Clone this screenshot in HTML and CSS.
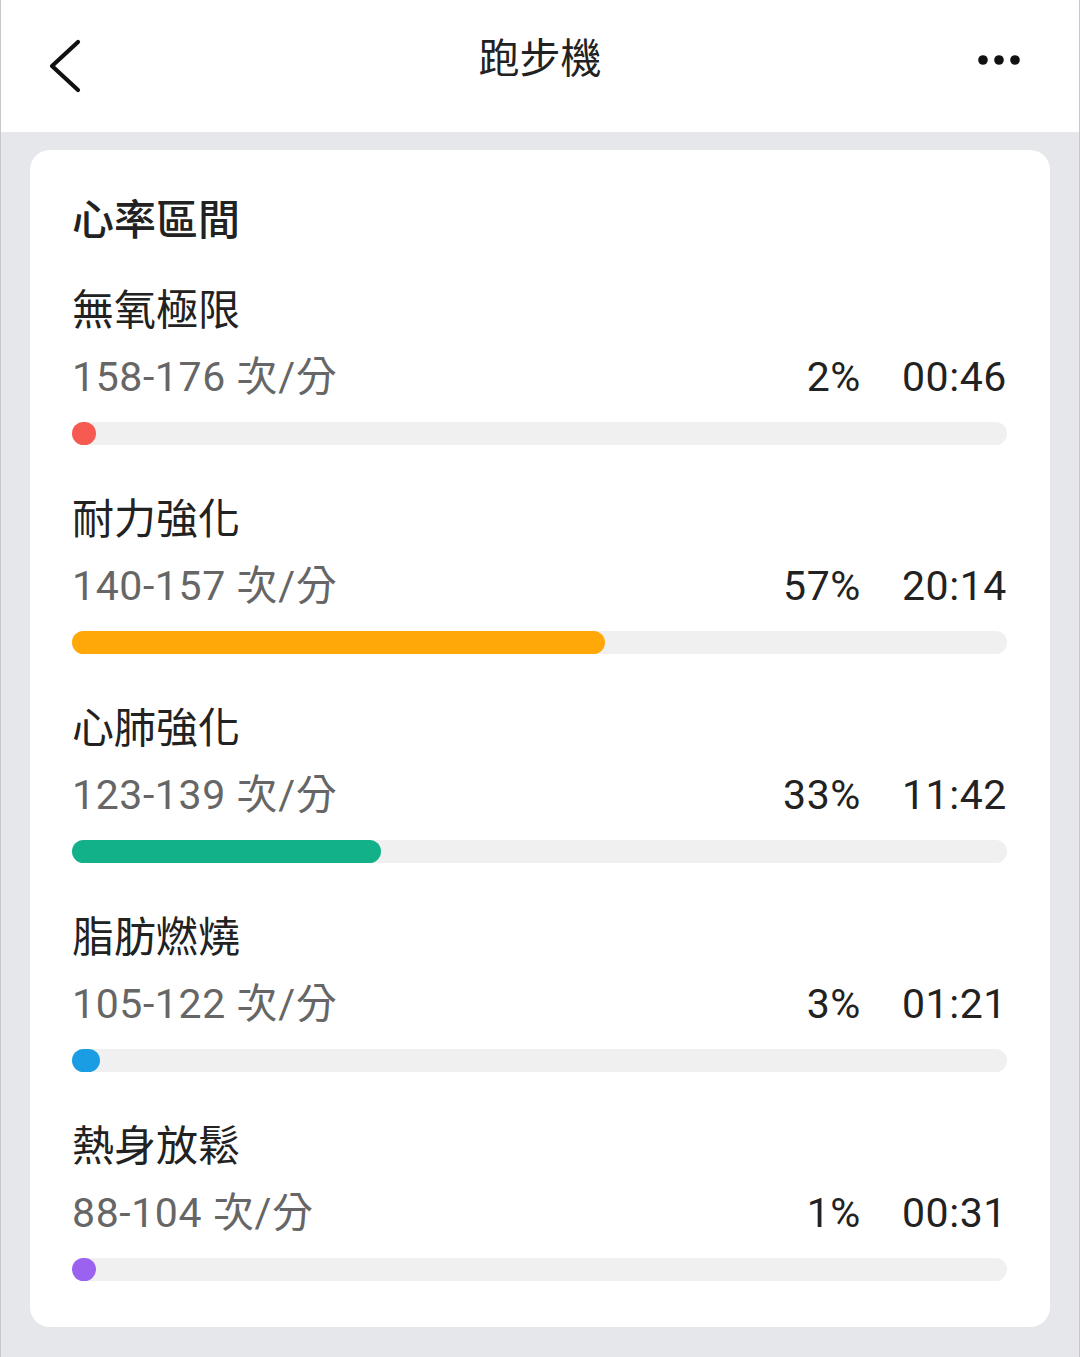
FILE: index.html
```html
<!DOCTYPE html>
<html lang="zh-Hant">
<head>
    <meta charset="UTF-8">
    <meta name="viewport" content="width=device-width, initial-scale=1.0">
    <title>跑步機</title>
    <link rel="stylesheet" href="styles.css">
</head>
<body>

<header class="topbar">
    <svg class="back" width="40" height="60" viewBox="0 0 40 60">
        <polyline points="30,6 4,30 30,54" fill="none" stroke="#111" stroke-width="4.2" stroke-linecap="round" stroke-linejoin="round"/>
    </svg>
    <h1>跑步機</h1>
    <svg class="more" width="48" height="12" viewBox="0 0 48 12">
        <circle cx="6" cy="6" r="4.8" fill="#111"/>
        <circle cx="22" cy="6" r="4.8" fill="#111"/>
        <circle cx="38" cy="6" r="4.8" fill="#111"/>
    </svg>
</header>

<main class="card">
    <h2>心率區間</h2>

    <div class="zone">
        <div class="zone-name">無氧極限</div>
        <div class="zone-info">
            <span class="range">158-176 次/分</span>
            <span class="pct">2%</span>
            <span class="time">00:46</span>
        </div>
        <div class="bar"><div class="fill red" style="width:2%"></div></div>
    </div>

    <div class="zone">
        <div class="zone-name">耐力強化</div>
        <div class="zone-info">
            <span class="range">140-157 次/分</span>
            <span class="pct">57%</span>
            <span class="time">20:14</span>
        </div>
        <div class="bar"><div class="fill orange" style="width:57%"></div></div>
    </div>

    <div class="zone">
        <div class="zone-name">心肺強化</div>
        <div class="zone-info">
            <span class="range">123-139 次/分</span>
            <span class="pct">33%</span>
            <span class="time">11:42</span>
        </div>
        <div class="bar"><div class="fill green" style="width:33%"></div></div>
    </div>

    <div class="zone">
        <div class="zone-name">脂肪燃燒</div>
        <div class="zone-info">
            <span class="range">105-122 次/分</span>
            <span class="pct">3%</span>
            <span class="time">01:21</span>
        </div>
        <div class="bar"><div class="fill blue" style="width:3%"></div></div>
    </div>

    <div class="zone">
        <div class="zone-name">熱身放鬆</div>
        <div class="zone-info">
            <span class="range">88-104 次/分</span>
            <span class="pct">1%</span>
            <span class="time">00:31</span>
        </div>
        <div class="bar"><div class="fill purple" style="width:1%"></div></div>
    </div>
</main>

</body>
</html>
```

FILE: styles.css
```css
/* Page */
body {
    margin: 0;
    min-height: 1357px;
    background: #e6e7ea;
    font-family: Roboto, "Noto Sans CJK TC", sans-serif;
    color: #222;
    border-left: 1px solid #c8c8cc;
    border-right: 1px solid #c8c8cc;
    box-sizing: border-box;
}

.topbar {
    height: 132px;
    background: #fff;
    display: flex;
    align-items: center;
    justify-content: space-between;
    padding: 0 54px 12px 47px;
    box-sizing: border-box;
    position: relative;
}

.topbar h1 {
    position: absolute;
    left: 0;
    right: 0;
    top: 31px;
    margin: 0;
    text-align: center;
    font-size: 41px;
    font-weight: 400;
    line-height: 56px;
    color: #222;
}

.back {
    margin-top: 12px;
}

/* Card */
.card {
    margin: 18px 29px 0 29px;
    background: #fff;
    border-radius: 20px;
    padding: 42px 43px 46px 42px;
}

.card h2 {
    margin: 0 0 32px;
    font-size: 42px;
    font-weight: 500;
    line-height: 58px;
}

.zone + .zone {
    margin-top: 46px;
}

.zone-name {
    font-size: 42px;
    line-height: 58px;
}

.zone-info {
    display: flex;
    align-items: center;
    margin-top: 8px;
    font-size: 41px;
    line-height: 58px;
    letter-spacing: 0.6px;
}

.range {
    flex: 1;
    color: #666;
}

.pct {
    margin-right: 38px;
}

.time {
    width: 108px;
    text-align: right;
}

.bar {
    margin-top: 16px;
    height: 23px;
    border-radius: 12px;
    background: #f0f0f1;
}

.fill {
    height: 100%;
    min-width: 24px;
    border-radius: 12px;
}

.red { background: #f75a50; }
.orange { background: #ffa808; }
.green { background: #13b189; }
.blue { background: #1a9de2; }
.purple { background: #9b62f0; }
```
